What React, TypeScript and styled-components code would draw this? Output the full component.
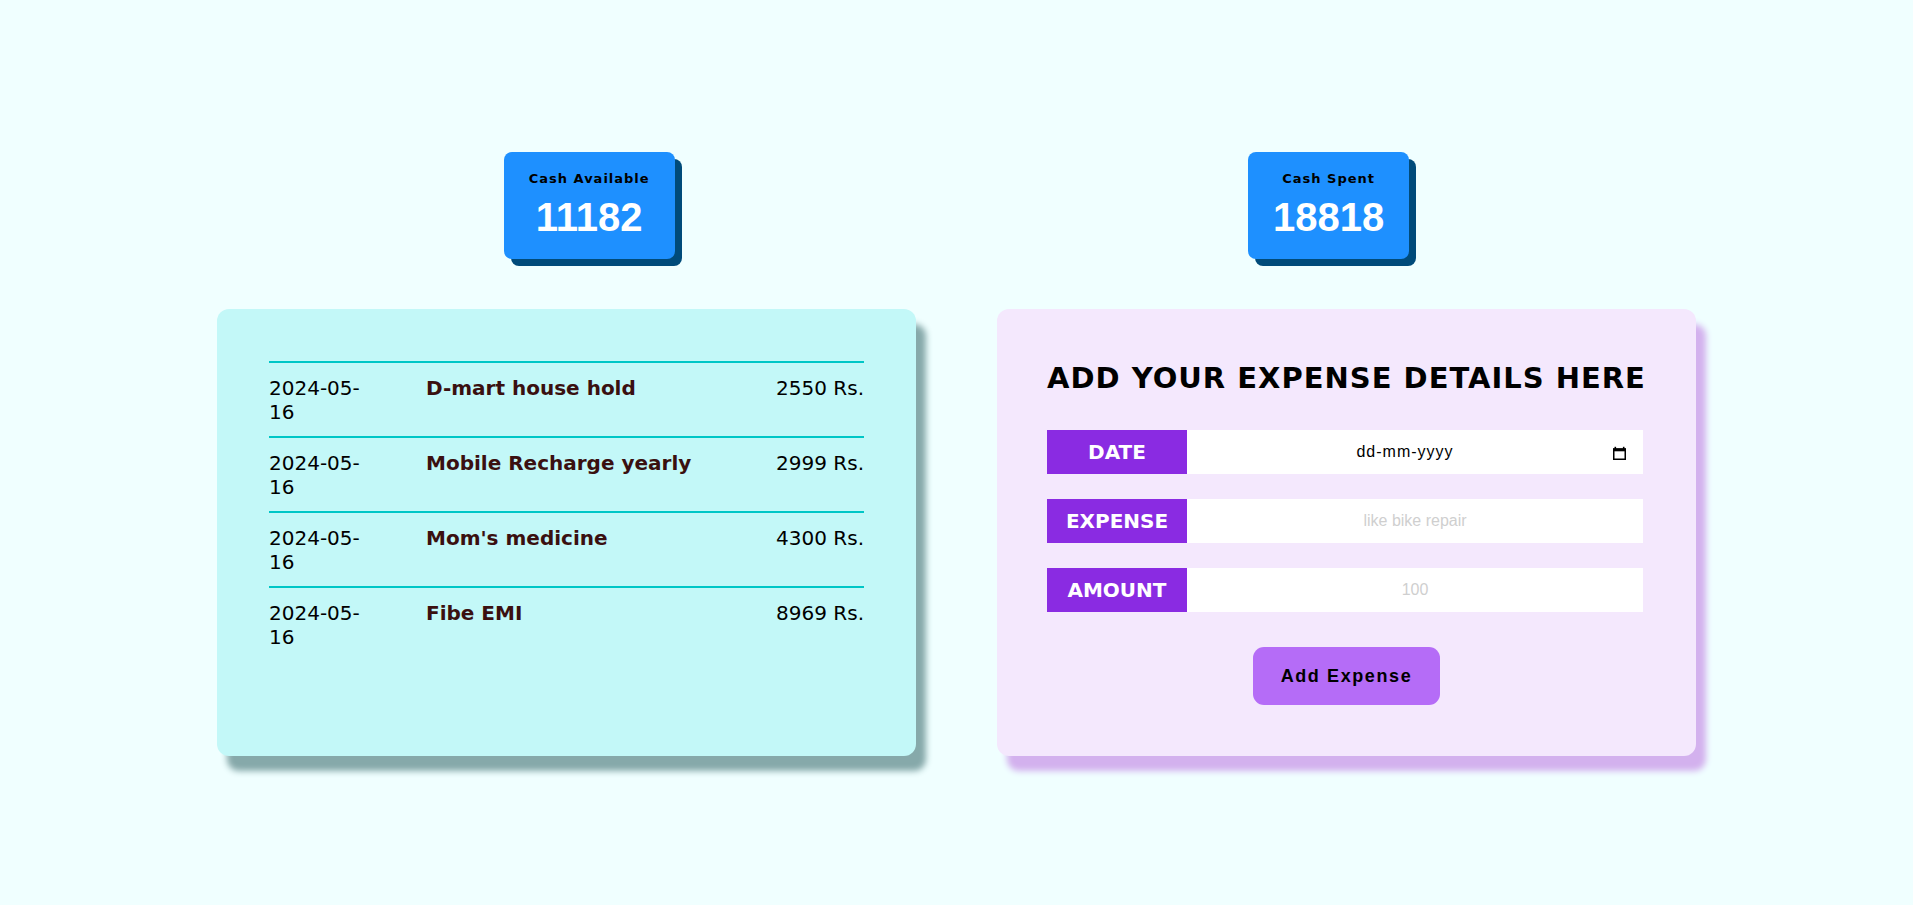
import React from "react";
import styled, { createGlobalStyle } from "styled-components";

const GlobalStyle = createGlobalStyle`
  html, body {
    margin: 0;
    padding: 0;
    background: #f0ffff;
    font-family: Verdana, "DejaVu Sans", sans-serif;
  }
  * { box-sizing: border-box; }
`;

const Page = styled.main`
  min-height: 100vh;
  padding-top: 3px;
  display: flex;
  flex-direction: column;
  align-items: center;
  justify-content: center;
`;

const Container = styled.div`
  width: 1479px;
  display: flex;
  flex-direction: column;
  gap: 50px;
`;

const TopRow = styled.div`
  display: flex;
  justify-content: space-around;
`;

const StatCard = styled.div`
  background: #1e90ff;
  border-radius: 8px;
  box-shadow: 7px 7px 0 #004b7a;
  padding: 19px 25px 19px;
  text-align: center;
`;

const StatLabel = styled.div`
  font-size: 13px;
  font-weight: bold;
  letter-spacing: 1px;
  color: #000;
  line-height: 16px;
`;

const StatValue = styled.div`
  font-family: Arial, "Liberation Sans", sans-serif;
  font-size: 40px;
  font-weight: bold;
  color: #fff;
  line-height: 46px;
  margin-top: 7px;
`;

const PanelRow = styled.div`
  display: flex;
  justify-content: space-between;
  align-items: stretch;
`;

const ListPanel = styled.section`
  width: 699px;
  background: #c3f8f8;
  border-radius: 12px;
  box-shadow: 10px 15px 6px #86a9aa;
  padding: 52px;
`;

const ExpenseRow = styled.div`
  display: grid;
  grid-template-columns: 157px 1fr auto;
  border-top: 2px solid #00c6c6;
  padding: 13px 0 12px;
  font-size: 20px;
  line-height: 24px;
`;

const DateCell = styled.div`
  max-width: 100px;
  color: #000;
`;

const DescCell = styled.div`
  font-weight: bold;
  color: #3a1010;
`;

const AmountCell = styled.div`
  text-align: right;
  color: #000;
`;

const FormPanel = styled.section`
  width: 699px;
  background: #f4e8fd;
  border-radius: 12px;
  box-shadow: 10px 15px 6px #d3b1ee;
  padding: 52px 53px 51px 50px;
  display: flex;
  flex-direction: column;
`;

const Title = styled.h2`
  margin: 0 0 35px;
  font-size: 29px;
  font-weight: bold;
  letter-spacing: 1px;
  text-align: center;
  color: #000;
  line-height: 34px;
  white-space: nowrap;
`;

const FieldList = styled.div`
  display: flex;
  flex-direction: column;
  gap: 25px;
`;

const Field = styled.label`
  display: flex;
  height: 44px;
`;

const FieldLabel = styled.span`
  width: 140px;
  flex: none;
  background: #8a2be2;
  color: #fff;
  font-size: 20px;
  font-weight: bold;
  display: flex;
  align-items: center;
  justify-content: center;
`;

const InputBox = styled.div`
  flex: 1;
  background: #fff;
  display: flex;
  align-items: center;
`;

const TextInput = styled.input<{ $dark?: boolean }>`
  flex: 1;
  min-width: 0;
  height: 100%;
  border: none;
  outline: none;
  background: transparent;
  text-align: center;
  font-family: Arial, "Liberation Sans", sans-serif;
  font-size: 16px;
  padding: 0 0 0 ${(p) => (p.$dark ? "16px" : "0")};
  letter-spacing: ${(p) => (p.$dark ? "1px" : "0")};
  &::placeholder {
    color: ${(p) => (p.$dark ? "#000" : "#cfcfcf")};
  }
`;

const PickerIcon = styled.span`
  display: flex;
  margin: 1px 17px 0 6px;
`;

const AddButton = styled.button`
  align-self: center;
  margin: 35px -3px 0 0;
  width: 187px;
  height: 58px;
  border: none;
  border-radius: 11px;
  background: #b56cf7;
  color: #000;
  font-family: Arial, "Liberation Sans", sans-serif;
  font-size: 18px;
  font-weight: bold;
  letter-spacing: 1.6px;
  cursor: pointer;
`;

const expenses = [
  { date: "2024-05-16", desc: "D-mart house hold", amount: 2550 },
  { date: "2024-05-16", desc: "Mobile Recharge yearly", amount: 2999 },
  { date: "2024-05-16", desc: "Mom's medicine", amount: 4300 },
  { date: "2024-05-16", desc: "Fibe EMI", amount: 8969 },
];

const CalendarIcon = () => (
  <svg width="13" height="14" viewBox="0 0 13 14">
    <rect x="0.75" y="3" width="11.5" height="10.25" fill="none" stroke="#000" strokeWidth="1.5" />
    <rect x="0" y="2.5" width="13" height="2.8" fill="#000" />
    <rect x="1.5" y="0.8" width="1.6" height="2.5" fill="#000" />
    <rect x="9.9" y="0.8" width="1.6" height="2.5" fill="#000" />
  </svg>
);

export default function App() {
  return (
    <>
      <GlobalStyle />
      <Page>
        <Container>
          <TopRow>
            <StatCard>
              <StatLabel>Cash Available</StatLabel>
              <StatValue>11182</StatValue>
            </StatCard>
            <StatCard>
              <StatLabel>Cash Spent</StatLabel>
              <StatValue>18818</StatValue>
            </StatCard>
          </TopRow>
          <PanelRow>
            <ListPanel>
              {expenses.map((e, i) => (
                <ExpenseRow key={i}>
                  <DateCell>{e.date}</DateCell>
                  <DescCell>{e.desc}</DescCell>
                  <AmountCell>{e.amount} Rs.</AmountCell>
                </ExpenseRow>
              ))}
            </ListPanel>
            <FormPanel>
              <Title>ADD YOUR EXPENSE DETAILS HERE</Title>
              <FieldList>
                <Field>
                  <FieldLabel>DATE</FieldLabel>
                  <InputBox>
                    <TextInput $dark placeholder="dd-mm-yyyy" />
                    <PickerIcon>
                      <CalendarIcon />
                    </PickerIcon>
                  </InputBox>
                </Field>
                <Field>
                  <FieldLabel>EXPENSE</FieldLabel>
                  <InputBox>
                    <TextInput placeholder="like bike repair" />
                  </InputBox>
                </Field>
                <Field>
                  <FieldLabel>AMOUNT</FieldLabel>
                  <InputBox>
                    <TextInput placeholder="100" />
                  </InputBox>
                </Field>
              </FieldList>
              <AddButton>Add Expense</AddButton>
            </FormPanel>
          </PanelRow>
        </Container>
      </Page>
    </>
  );
}
